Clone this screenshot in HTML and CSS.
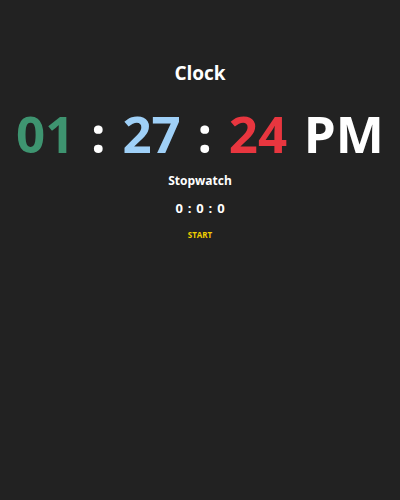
FILE: index.html
```html
<!DOCTYPE html>
<html>
<head>
<meta charset="utf-8">
<link rel="stylesheet" href="styles.css">
</head>
<body>
<div class="app">
  <h1 class="title">Clock</h1>
  <div class="clock"><span class="hours">01</span> <span class="sep">:</span> <span class="minutes">27</span> <span class="sep">:</span> <span class="seconds">24</span> <span class="ampm">PM</span></div>
  <h2 class="sw-title">Stopwatch</h2>
  <div class="sw-time">0 : 0 : 0</div>
  <button class="sw-btn">START</button>
</div>
</body>
</html>
```
FILE: styles.css
```css
html, body {
  margin: 0;
  padding: 0;
  background: #222222;
  height: 100%;
}
body {
  font-family: "Open Sans", "DejaVu Sans", sans-serif;
  color: #ffffff;
}
.app {
  display: flex;
  flex-direction: column;
  align-items: center;
  padding-top: 59px;
}
.title {
  margin: 0;
  font-size: 19px;
  font-weight: 700;
  line-height: 28px;
}
.clock {
  margin-top: 16px;
  font-size: 51px;
  font-weight: 700;
  line-height: 60px;
  word-spacing: 3.5px;
  white-space: nowrap;
}
.hours { color: #3e9470; }
.minutes { color: #9fd0f7; }
.seconds { color: #e8363f; }
.ampm, .sep { color: #ffffff; }
.sw-title {
  margin: 9px 0 0;
  font-size: 12px;
  font-weight: 700;
  line-height: 18px;
}
.sw-time {
  margin-top: 9px;
  font-size: 13px;
  font-weight: 700;
  line-height: 18px;
  word-spacing: 1.5px;
}
.sw-btn {
  margin-top: 12px;
  background: none;
  border: none;
  padding: 0;
  font-family: inherit;
  font-size: 8px;
  font-weight: 700;
  color: #f0d000;
  line-height: 12px;
}
```
